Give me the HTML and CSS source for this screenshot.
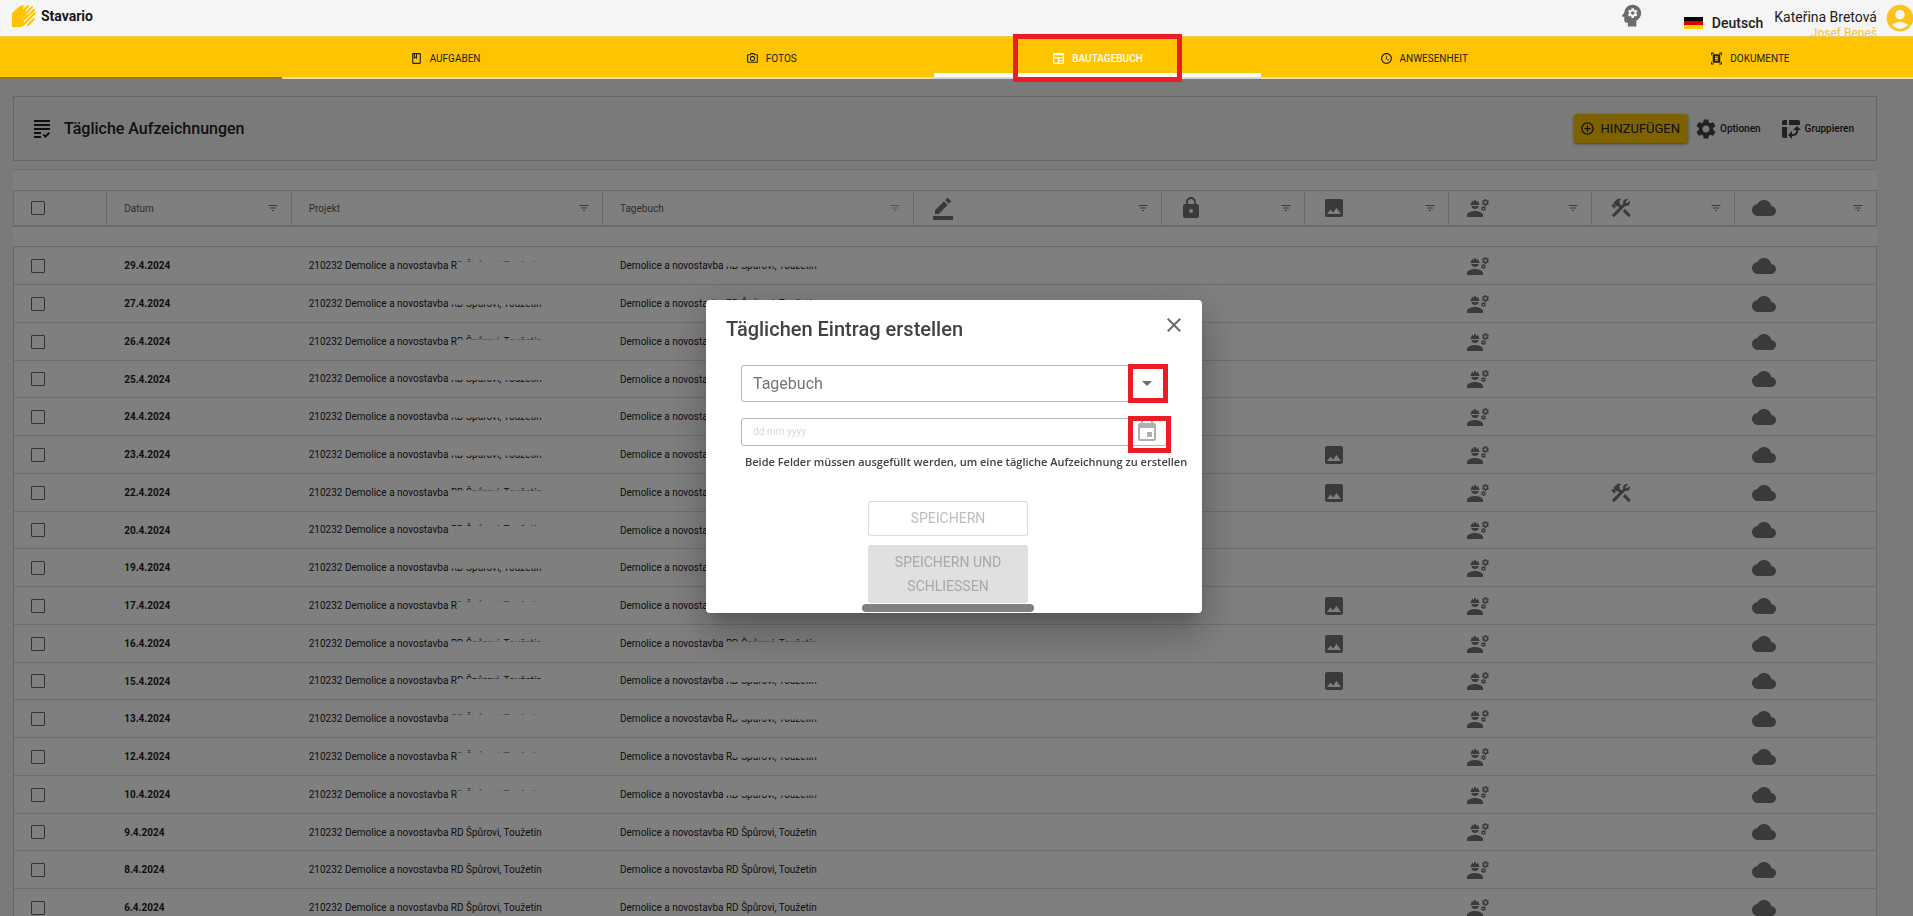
FILE: index.html
```html
<!DOCTYPE html>
<html lang="de">
<head>
<meta charset="utf-8">
<meta name="viewport" content="width=device-width, initial-scale=1">
<title>Stavario – Bautagebuch</title>
<link rel="stylesheet" href="styles.css">
</head>
<body>
<svg class="sprite" aria-hidden="true">
  <symbol id="i-book" viewBox="0 0 24 24"><path d="M18 2H6c-1.1 0-2 .9-2 2v16c0 1.1.9 2 2 2h12c1.1 0 2-.9 2-2V4c0-1.1-.9-2-2-2zM9 4h2v5l-1-.75L9 9V4zm9 16H6V4h1v9l3-2.25L13 13V4h5v16z"/></symbol>
  <symbol id="i-camera" viewBox="0 0 24 24"><path d="M20 4h-3.17L15 2H9L7.17 4H4c-1.1 0-2 .9-2 2v12c0 1.1.9 2 2 2h16c1.1 0 2-.9 2-2V6c0-1.1-.9-2-2-2zm0 14H4V6h4.05l1.83-2h4.24l1.83 2H20v12zM12 7c-2.76 0-5 2.24-5 5s2.24 5 5 5 5-2.24 5-5-2.24-5-5-5zm0 8c-1.65 0-3-1.35-3-3s1.35-3 3-3 3 1.35 3 3-1.35 3-3 3z"/></symbol>
  <symbol id="i-news" viewBox="0 0 24 24"><path fill-rule="evenodd" d="M2 2h20v18c0 1.1-.9 2-2 2H4c-1.100 0-2-.9-2-2V2zm2 4v3h16V6H4zm0 6v8h7v-8H4zm9 0v3h7v-3h-7zm0 5v3h7v-3h-7z"/></symbol>
  <symbol id="i-clock" viewBox="0 0 24 24"><path d="M11.99 2C6.47 2 2 6.48 2 12s4.470 10 9.990 10C17.520 22 22 17.520 22 12S17.520 2 11.990 2zM12 20c-4.420 0-8-3.580-8-8s3.580-8 8-8 8 3.580 8 8-3.580 8-8 8zm.5-13H11v6l5.250 3.150.75-1.230-4.500-2.670z"/></symbol>
  <symbol id="i-scan" viewBox="0 0 24 24"><path d="M7 3H4v3H2V1h5v2zm15 3V1h-5v2h3v3h2zM7 21H4v-3H2v5h5v-2zm13-3v3h-3v2h5v-5h-2zM19 18c0 1.100-.9 2-2 2H7c-1.100 0-2-.9-2-2V6c0-1.100.9-2 2-2h10c1.100 0 2 .9 2 2v12zM15 8H9v2h6V8zm0 3H9v2h6v-2zm0 3H9v2h6v-2z"/></symbol>
  <symbol id="i-grading" viewBox="0 0 24 24"><path d="M4 7h16v2H4V7zm0 6h16v-2H4v2zm0 4h7v-2H4v2zm0 4h7v-2H4v2zm11.410-2.830L14 16.750l-1.410 1.410L15.410 21 20 16.420 18.580 15l-3.170 3.170zM4 3v2h16V3H4z"/></symbol>
  <symbol id="i-add" viewBox="0 0 24 24"><path d="M13 7h-2v4H7v2h4v4h2v-4h4v-2h-4V7zm-1-5C6.480 2 2 6.480 2 12s4.480 10 10 10 10-4.480 10-10S17.520 2 12 2zm0 18c-4.410 0-8-3.590-8-8s3.590-8 8-8 8 3.590 8 8-3.590 8-8 8z"/></symbol>
  <symbol id="i-settings" viewBox="0 0 24 24"><path d="M19.140 12.940c.04-.3.06-.61.06-.94 0-.32-.02-.64-.07-.94l2.030-1.580c.18-.14.23-.41.12-.61l-1.920-3.320c-.12-.22-.37-.29-.59-.22l-2.390.96c-.5-.38-1.030-.7-1.620-.94l-.36-2.540c-.04-.24-.24-.41-.48-.41h-3.840c-.24 0-.43.17-.47.41l-.36 2.540c-.59.24-1.130.57-1.620.94l-2.390-.96c-.22-.08-.47 0-.59.22L2.740 8.870c-.12.21-.08.47.12.61l2.030 1.580c-.05.3-.09.63-.09.94s.02.64.07.94l-2.030 1.580c-.18.14-.23.41-.12.61l1.920 3.320c.12.22.37.29.59.22l2.390-.96c.5.38 1.030.7 1.620.94l.36 2.540c.05.24.24.41.48.41h3.840c.24 0 .44-.17.47-.41l.36-2.540c.59-.24 1.130-.56 1.620-.94l2.390.96c.22.08.47 0 .59-.22l1.920-3.320c.12-.22.07-.47-.12-.61l-2.010-1.580zM12 15.600c-1.980 0-3.600-1.620-3.600-3.600s1.620-3.600 3.600-3.600 3.600 1.620 3.600 3.600-1.620 3.600-3.600 3.600z"/></symbol>
  <symbol id="i-pivot" viewBox="0 0 24 24"><path d="M10 8h11V5c0-1.100-.9-2-2-2h-9v5zM3 8h5V3H5c-1.100 0-2 .9-2 2v3zM5 21h3V10H3v9c0 1.100.9 2 2 2zM13 22l-4-4 4-4zM14 13l4-4 4 4zM14.580 19H13v-2h1.580c1.330 0 2.420-1.080 2.420-2.420V13h2v1.580c0 2.440-1.980 4.420-4.420 4.420z"/></symbol>
  <symbol id="i-filter" viewBox="0 0 24 24"><path d="M10 18h4v-2h-4v2zM3 6v2h18V6H3zm3 7h12v-2H6v2z"/></symbol>
  <symbol id="i-edit" viewBox="0 0 24 24"><path d="M22 24H2v-4h20v4zM13.060 5.190l3.750 3.750L7.750 18H4v-3.750l9.060-9.060zm4.820 2.680-3.750-3.750 1.830-1.830c.39-.39 1.020-.39 1.410 0l2.340 2.340c.39.39.39 1.020 0 1.410l-1.830 1.830z"/></symbol>
  <symbol id="i-lock" viewBox="0 0 24 24"><path d="M18 8h-1V6c0-2.760-2.240-5-5-5S7 3.240 7 6v2H6c-1.100 0-2 .9-2 2v10c0 1.100.9 2 2 2h12c1.100 0 2-.9 2-2V10c0-1.100-.9-2-2-2zm-6 9c-1.100 0-2-.9-2-2s.9-2 2-2 2 .9 2 2-.9 2-2 2zm3.100-9H8.900V6c0-1.710 1.390-3.100 3.100-3.100 1.710 0 3.100 1.390 3.100 3.100v2z"/></symbol>
  <symbol id="i-image" viewBox="0 0 24 24"><path d="M21 19V5c0-1.100-.9-2-2-2H5c-1.100 0-2 .9-2 2v14c0 1.100.9 2 2 2h14c1.100 0 2-.9 2-2zM8.500 13.500l2.500 3.010L14.500 12l4.500 6H5l3.500-4.500z"/></symbol>
  <symbol id="i-worker" viewBox="0 0 24 24"><path d="M9 15c-2.670 0-8 1.340-8 4v2h16v-2c0-2.660-5.330-4-8-4zM22.100 6.840c.01-.11.02-.22.02-.34 0-.12-.01-.23-.03-.34l.74-.58c.07-.05.08-.15.04-.22l-.7-1.210c-.04-.08-.14-.1-.21-.08l-.86.35c-.18-.14-.38-.25-.59-.34l-.13-.93c-.02-.09-.09-.15-.18-.15h-1.400c-.09 0-.16.06-.17.15l-.13.93c-.21.09-.41.21-.59.34l-.87-.35c-.08-.03-.17 0-.21.08l-.7 1.210c-.04.08-.03.17.04.22l.74.58c-.02.11-.03.23-.03.34 0 .11.01.23.03.34l-.74.58c-.07.05-.08.15-.04.22l.7 1.210c.04.08.14.1.21.08l.87-.35c.18.14.38.25.59.34l.13.93c.01.09.08.15.17.15h1.400c.09 0 .16-.06.17-.15l.13-.93c.21-.09.41-.21.59-.34l.87.35c.08.03.17 0 .21-.08l.7-1.210c.04-.08.03-.17-.04-.22l-.73-.58zm-2.600.91c-.69 0-1.250-.56-1.250-1.250s.56-1.250 1.250-1.250 1.250.56 1.250 1.250-.56 1.250-1.250 1.250zM19.920 11.680l-.5-.87c-.03-.06-.1-.08-.15-.06l-.62.25c-.13-.1-.27-.18-.42-.24l-.09-.66c-.02-.06-.08-.1-.14-.1h-1c-.06 0-.11.04-.12.11l-.09.66c-.15.06-.29.15-.42.24l-.62-.25c-.06-.02-.12 0-.15.06l-.5.87c-.03.06-.02.12.03.16l.53.41c-.01.08-.02.16-.02.24 0 .08.01.17.02.24l-.53.41c-.05.04-.06.11-.03.16l.5.87c.03.06.1.08.15.06l.62-.25c.13.1.27.18.42.24l.09.66c.01.07.06.11.12.11h1c.06 0 .12-.04.12-.11l.09-.66c.15-.06.29-.15.42-.24l.62.25c.06.02.12 0 .15-.06l.5-.87c.03-.06.02-.12-.03-.16l-.52-.41c.01-.08.02-.16.02-.24 0-.08-.01-.17-.02-.24l.53-.41c.05-.04.06-.11.04-.17zm-2.420 1.650c-.46 0-.83-.38-.83-.83 0-.46.38-.83.83-.83s.83.38.83.83c0 .46-.37.83-.83.83zM4.740 9h8.530c.27 0 .49-.22.49-.49v-.02c0-.27-.22-.49-.49-.49H13c0-1.480-.81-2.750-2-3.450v.95c0 .28-.22.5-.5.5s-.5-.22-.5-.5V4.140C9.680 4.060 9.350 4 9 4s-.68.06-1 .14V5.500c0 .28-.22.5-.5.5S7 5.780 7 5.500v-.95C5.810 5.250 5 6.520 5 8h-.26c-.27 0-.49.22-.49.49v.03c0 .26.22.48.49.48zM9 13c1.860 0 3.410-1.280 3.860-3H5.140c.45 1.720 2 3 3.860 3z"/></symbol>
  <symbol id="i-tools" viewBox="0 0 24 24"><path d="M13.783 15.172l2.121-2.121 5.996 5.996-2.121 2.121zM17.500 10c1.930 0 3.500-1.570 3.500-3.500 0-.58-.16-1.120-.41-1.600l-2.700 2.700-1.490-1.490 2.700-2.700c-.48-.25-1.020-.41-1.600-.41C15.570 3 14 4.570 14 6.500c0 .41.08.8.21 1.160l-1.850 1.850-1.780-1.780.71-.71-1.410-1.410L12 3.490c-1.170-1.170-3.070-1.170-4.240 0L4.220 7.030l1.410 1.410H2.810l-.71.71 3.540 3.540.71-.71V9.150l1.410 1.410.71-.71 1.780 1.780-7.410 7.410 2.120 2.120L16.340 9.790c.36.13.75.21 1.160.21z"/></symbol>
  <symbol id="i-cloud" viewBox="0 0 24 24"><path d="M19.350 10.040C18.670 6.590 15.640 4 12 4 9.110 4 6.600 5.640 5.350 8.040 2.340 8.360 0 10.910 0 14c0 3.310 2.690 6 6 6h13c2.760 0 5-2.240 5-5 0-2.640-2.050-4.780-4.650-4.960z"/></symbol>
  <symbol id="i-mind" viewBox="0 0 24 24"><path d="M13 8.570c-.79 0-1.430.64-1.430 1.430s.64 1.430 1.430 1.430 1.430-.64 1.430-1.430-.64-1.430-1.430-1.430zM13 3C9.250 3 6.200 5.940 6.020 9.640L4.100 12.200c-.25.33-.01.8.4.8H6v3c0 1.100.9 2 2 2h1v3h7v-4.680c2.360-1.120 4-3.530 4-6.320 0-3.870-3.130-7-7-7zm3 7c0 .13-.01.26-.02.39l.83.66c.08.06.1.16.05.25l-.8 1.390c-.05.09-.16.12-.24.09l-.99-.4c-.21.16-.43.29-.67.39L14 13.830c-.01.1-.1.17-.2.17h-1.600c-.1 0-.18-.07-.2-.17l-.15-1.060c-.25-.1-.47-.23-.68-.39l-.99.4c-.09.03-.2 0-.25-.09l-.8-1.390c-.05-.08-.03-.19.05-.25l.84-.66c-.01-.13-.02-.26-.02-.39s.02-.27.04-.39l-.85-.66c-.08-.06-.1-.16-.05-.26l.8-1.380c.05-.09.15-.12.24-.09l1 .4c.2-.15.43-.29.67-.39L12 6.170c.02-.1.1-.17.2-.17h1.600c.1 0 .18.07.2.17l.15 1.060c.24.1.46.23.67.39l1-.4c.09-.03.2 0 .24.09l.8 1.380c.05.09.03.2-.05.26l-.85.66c.03.12.04.25.04.39z"/></symbol>
  <symbol id="i-user" viewBox="0 0 24 24"><path d="M12 2C6.480 2 2 6.480 2 12s4.480 10 10 10 10-4.480 10-10S17.520 2 12 2zm0 4c1.930 0 3.500 1.570 3.500 3.500S13.930 13 12 13s-3.500-1.570-3.500-3.500S10.070 6 12 6zm0 14c-2.030 0-4.430-.82-6.140-2.880C7.550 15.800 9.680 15 12 15s4.450.8 6.140 2.120C16.430 19.180 14.030 20 12 20z"/></symbol>
  <symbol id="i-close" viewBox="0 0 24 24"><path d="M19 6.410L17.590 5 12 10.590 6.410 5 5 6.410 10.590 12 5 17.590 6.410 19 12 13.410 17.590 19 19 17.590 13.410 12z"/></symbol>
  <symbol id="i-down" viewBox="0 0 24 24"><path d="M7 10l5 5 5-5z"/></symbol>
  <symbol id="i-event" viewBox="0 0 24 24"><path d="M17 12h-5v5h5v-5zM16 1v2H8V1H6v2H5c-1.110 0-1.990.9-1.990 2L3 19c0 1.100.89 2 2 2h14c1.100 0 2-.9 2-2V5c0-1.100-.9-2-2-2h-1V1h-2zm3 18H5V8h14v11z"/></symbol>
</svg>

<header class="header">
  <div class="topbar">
    <a class="brand" href="#">
      <svg class="brand-mark" viewBox="0 0 24 22" aria-hidden="true">
        <path class="brand-solid" d="M0 8 8 1l4-1-1 4 3-1-1 5 2 1-4 5 1 3-2 5H0z"/>
        <path class="brand-rays" d="M9 8l7-7M10 12l10-10M8 18 22 5M11 20l12-12M16 20l6-6"/>
      </svg>
      <span>Stavario</span>
    </a>
    <div class="account">
      <button class="icon-button assistant" aria-label="Assistent"><svg class="icon icon-l"><use href="#i-mind"/></svg></button>
      <button class="language">
        <svg class="flag" viewBox="0 0 19 12" aria-hidden="true"><path fill="#000" d="M0 0h19v4H0z"/><path fill="#d00" d="M0 4h19v4H0z"/><path fill="#ffce00" d="M0 8h19v4H0z"/></svg>
        <span>Deutsch</span>
      </button>
      <div class="names"><span class="name-main">Kateřina Bretová</span><span class="name-sub">Josef Beneš</span></div>
      <button class="icon-button avatar" aria-label="Konto"><svg class="icon icon-xl"><use href="#i-user"/></svg></button>
    </div>
  </div>
  <nav class="tabs">
    <a class="tab" href="#"><svg class="icon icon-s"><use href="#i-book"/></svg>AUFGABEN</a>
    <a class="tab" href="#"><svg class="icon icon-s"><use href="#i-camera"/></svg>FOTOS</a>
    <a class="tab tab-active" href="#" aria-current="page"><svg class="icon icon-s"><use href="#i-news"/></svg>BAUTAGEBUCH<span class="marker marker-tab"></span></a>
    <a class="tab" href="#"><svg class="icon icon-s"><use href="#i-clock"/></svg>ANWESENHEIT</a>
    <a class="tab" href="#"><svg class="icon icon-s"><use href="#i-scan"/></svg>DOKUMENTE</a>
  </nav>
</header>

<main class="main">
  <section class="panel">
    <svg class="icon"><use href="#i-grading"/></svg>
    <h1 class="panel-title">Tägliche Aufzeichnungen</h1>
    <button class="add"><svg class="icon icon-m"><use href="#i-add"/></svg>HINZUFÜGEN</button>
    <button class="tool"><svg class="icon"><use href="#i-settings"/></svg>Optionen</button>
    <button class="tool"><svg class="icon"><use href="#i-pivot"/></svg>Gruppieren</button>
  </section>
  <section class="sheet">
    <table class="grid">
      <colgroup><col class="c-check"><col class="c-date"><col class="c-text"><col class="c-text"><col class="c-sign"><col class="c-icon"><col class="c-icon"><col class="c-icon"><col class="c-icon"><col class="c-icon"></colgroup>
      <thead id="head"></thead>
      <tbody class="spacer" aria-hidden="true"><tr><td colspan="10"></td></tr></tbody>
      <tbody id="rows"></tbody>
    </table>
  </section>
</main>

<div class="backdrop">
  <form class="dialog" role="dialog" aria-labelledby="dialog-title">
    <div class="dialog-head">
      <h2 class="dialog-title" id="dialog-title">Täglichen Eintrag erstellen</h2>
      <button type="button" class="icon-button close" aria-label="Schließen"><svg class="icon"><use href="#i-close"/></svg></button>
    </div>
    <div class="fields">
      <div class="field">
        <select class="control select" aria-label="Tagebuch"><option>Tagebuch</option></select>
        <svg class="icon field-icon arrow"><use href="#i-down"/></svg>
        <span class="marker marker-select"></span>
      </div>
      <div class="field">
        <input class="control date" type="text" placeholder="dd.mm.yyyy" aria-label="Datum">
        <svg class="icon field-icon calendar"><use href="#i-event"/></svg>
        <span class="marker marker-date"></span>
      </div>
    </div>
    <p class="hint">Beide Felder müssen ausgefüllt werden, um eine tägliche Aufzeichnung zu erstellen</p>
    <div class="actions">
      <button type="button" class="action outlined" disabled>SPEICHERN</button>
      <button type="button" class="action filled" disabled>SPEICHERN UND SCHLIESSEN</button>
      <span class="scroll-thumb"></span>
    </div>
  </form>
</div>
<script src="app.js"></script>
</body>
</html>
```
FILE: styles.css
```css
* { box-sizing: border-box; }

body {
  margin: 0;
  height: 100vh;
  overflow: hidden;
  background: #f5f5f5;
  color: #212121;
  font-family: Roboto, "Open Sans", sans-serif;
  font-size: 10px;
}

button, input, select { font: inherit; color: inherit; }
button { border: 0; background: none; padding: 0; }
a { color: inherit; text-decoration: none; }

.sprite { display: none; }
.icon { width: 24px; height: 24px; flex: none; display: block; fill: currentColor; }
.icon-s { width: 13px; height: 13px; }
.icon-m { width: 15px; height: 15px; }
.icon-l { width: 29px; height: 29px; }
.icon-xl { width: 32px; height: 32px; }

/* header */
.header { position: relative; z-index: 2; }
.topbar {
  display: flex;
  justify-content: space-between;
  align-items: flex-start;
  height: 37px;
  padding-left: 12px;
  overflow: hidden;
  background: #f5f5f5;
  border-bottom: 1px solid #e9cb5c;
}
.brand { display: flex; align-items: center; gap: 5px; padding-top: 5px; font-size: 14px; font-weight: 700; line-height: 22px; color: #15171f; }
.brand-mark { width: 24px; height: 22px; }
.brand-solid { fill: #ffc400; }
.brand-rays { fill: none; stroke: #ffc400; stroke-width: 2; stroke-linecap: round; }
.account { display: flex; align-items: flex-start; }
.assistant { color: #6b6b6b; padding-top: 1px; margin-right: 38px; }
.language { display: flex; align-items: center; gap: 9px; padding-top: 11px; margin-right: 11px; font-size: 14px; font-weight: 500; line-height: 24px; }
.flag { width: 19px; height: 12px; }
.names { display: flex; flex-direction: column; align-items: flex-end; padding-top: 9px; line-height: 16px; font-size: 14px; }
.name-sub { font-size: 12px; color: #f0c63a; }
.avatar { color: #fcc419; padding-top: 2px; margin: 0 -3px 0 7px; }

.tabs { display: flex; height: 42px; padding-left: 282px; background: linear-gradient(#ffc400, #ffc400 40px, #8a7432 40px); }
.tab {
  position: relative;
  flex: 1;
  display: flex;
  align-items: center;
  justify-content: center;
  gap: 7px;
  padding-top: 3px;
  background: #ffc400;
  border-bottom: 2px solid #e6dcae;
}
.tab-active { color: #fff; font-weight: 500; border-bottom-color: #d6d6d6; box-shadow: inset 0 -4px #fff; }

.marker { position: absolute; border: 5px solid #ec1c24; pointer-events: none; }
.marker-tab { inset: -3px 79px -5px; }
.marker-select { inset: -1px -1px -1px auto; width: 40px; }
.marker-date { inset: -2px -4px -7px auto; width: 43px; }

/* page */
.main { padding: 17px 36px 0 13px; }
.panel {
  display: flex;
  align-items: center;
  min-height: 65px;
  padding: 0 22px 0 16px;
  border: 1px solid #ccc;
}
.panel-title { flex: 1; margin: 0; padding-left: 10px; font-size: 16px; font-weight: 500; line-height: 24px; }
.add {
  display: flex;
  align-items: center;
  gap: 6px;
  height: 29px;
  padding: 0 8px 0 6px;
  border-radius: 3px;
  background: #ffc400;
  box-shadow: 0 1px 3px rgba(0, 0, 0, .5);
  font-size: 13px;
}
.tool { display: flex; align-items: center; gap: 2px; font-weight: 500; margin-left: 6px; }
.tool + .tool { margin-left: 18px; }
.tool .icon { color: #424242; }

.sheet { margin-top: 8px; padding-top: 20px; background: #fff; border-top: 1px solid #e3e3e3; }
.grid { width: 100%; table-layout: fixed; border-spacing: 0; }
.c-check { width: 5%; }
.c-date { width: 9.9%; }
.c-text { width: 16.7%; }
.c-sign { width: 13.3%; }
.grid th, .grid td { padding: 0 12px 0 17px; text-align: left; white-space: nowrap; font-weight: 400; }
.grid th { height: 37px; border: 1px solid #d4d4d4; border-right-width: 0; border-bottom-width: 2px; color: #5c5c5c; }
.grid th:last-child { border-right-width: 1px; }
.th { display: flex; align-items: center; justify-content: space-between; }
.th .icon { color: #757575; }
.th .filter { width: 12px; height: 12px; }
.th .filter-on { color: #d9a066; }
.grid .spacer td { height: 19px; padding: 0; }
#rows td { height: 38px; border-bottom: 1px solid #dcdcdc; padding-left: 18px; }
#rows tr:first-child td { border-top: 1px solid #d0d0d0; height: 39px; }
#rows tr:nth-child(4n) td { height: 37px; }
#rows td:first-child { border-left: 1px solid #d0d0d0; padding-left: 17px; }
#rows td:last-child { border-right: 1px solid #d0d0d0; }
#rows .icon { color: #757575; }
#rows .day { font-weight: 700; }
.check { appearance: none; display: block; width: 14px; height: 14px; margin: 0; border: 1px solid #666; border-radius: 1px; }

/* partly hidden project names */
.cut { display: inline-block; line-height: 14px; vertical-align: middle; }
.cut-top { clip-path: inset(8px 0 0 0); }
.cut-low { clip-path: inset(0 0 9px 0); }
.cut-mid { clip-path: inset(0 0 11px 0); }

/* dialog */
.backdrop {
  position: fixed;
  inset: 0;
  z-index: 1;
  display: flex;
  align-items: center;
  justify-content: center;
  padding-bottom: 4px;
  background: rgba(0, 0, 0, .5);
}
.dialog {
  width: 496px;
  max-width: 90%;
  padding: 16px 20px 10px;
  margin-right: 5px;
  border-radius: 4px;
  background: #fff;
  box-shadow: 0 11px 15px -7px rgba(0, 0, 0, .2), 0 24px 38px 3px rgba(0, 0, 0, .14), 0 9px 46px 8px rgba(0, 0, 0, .12);
}
.dialog-head { display: flex; align-items: flex-start; justify-content: space-between; }
.dialog-title { margin: 0; font-size: 20px; font-weight: 500; line-height: 26px; color: #424242; }
.close { color: #6b6b6b; margin-right: -4px; margin-top: -3px; }
.fields { display: grid; gap: 16px; padding: 23px 15px 0; }
.field { position: relative; display: flex; align-items: center; }
.control { width: 100%; border: 1px solid #b5b5b5; border-radius: 3px; padding: 0 11px; background: #fff; }
.select { appearance: none; height: 37px; font-size: 16px; color: #757575; }
.date { height: 28px; }
.date::placeholder { color: #d8d8d8; opacity: 1; }
.field-icon { position: absolute; right: 8px; pointer-events: none; }
.arrow { color: #6b6b6b; }
.calendar { color: #b0b0b0; }
.hint { margin: 8px -8px 0 19px; font-family: "Open Sans", "Noto Sans", sans-serif; font-size: 11px; font-weight: 600; line-height: 16px; color: #424242; white-space: nowrap; }
.actions { position: relative; display: flex; flex-direction: column; align-items: center; gap: 9px; margin-right: 12px; padding-top: 31px; }
.action { width: 160px; border-radius: 3px; padding: 5px 12px; font-size: 14px; line-height: 24px; }
.outlined { border: 1px solid #dcdcdc; color: #bdbdbd; height: 35px; padding: 0 12px; }
.filled { background: #e0e0e0; color: #a8a8a8; }
.scroll-thumb { position: absolute; bottom: -9px; width: 172px; height: 8px; border-radius: 4px; background: #808080; }
```
FILE: app.js
```javascript
const icon = (name, cls = "") => `<svg class="icon ${cls}"><use href="#i-${name}"/></svg>`;

const columns = [
  { label: "Datum" }, { label: "Projekt" }, { label: "Tagebuch", filtered: true },
  { icon: "edit" }, { icon: "lock" }, { icon: "image" }, { icon: "worker" }, { icon: "tools" }, { icon: "cloud" }
];

const NAME = "RD Špůrovi, Toužetín";

// date, [readable letters, cut] of the project, [readable letters, cut] of the diary, extra icons
const entries = [
  ["29.4.2024", [1, "mid"], [0, "top"]],
  ["27.4.2024", [0, "top"], [0, "low"]],
  ["26.4.2024", [1, "low"], [20, ""]],
  ["25.4.2024", [0, "top"], [20, ""]],
  ["24.4.2024", [0, "top"], [20, ""]],
  ["23.4.2024", [0, "top"], [20, ""], "image"],
  ["22.4.2024", [0, "low"], [20, ""], "image tools"],
  ["20.4.2024", [0, "mid"], [20, ""]],
  ["19.4.2024", [0, "top"], [20, ""]],
  ["17.4.2024", [1, "mid"], [20, ""], "image"],
  ["16.4.2024", [0, "low"], [0, "low"], "image"],
  ["15.4.2024", [1, "low"], [0, "top"], "image"],
  ["13.4.2024", [0, "mid"], [1, "top"]],
  ["12.4.2024", [1, "mid"], [1, "top"]],
  ["10.4.2024", [1, "mid"], [0, "top"]],
  ["9.4.2024", [20, ""], [20, ""]],
  ["8.4.2024", [20, ""], [20, ""]],
  ["6.4.2024", [20, ""], [20, ""]]
];

const name = ([shown, cut]) =>
  NAME.slice(0, shown) + (cut ? `<span class="cut cut-${cut}">${NAME.slice(shown)}</span>` : "");

document.getElementById("head").innerHTML =
  `<tr><th><input type="checkbox" class="check" aria-label="Alle auswählen"></th>` +
  columns.map(c => `<th><div class="th">${c.icon ? icon(c.icon) : `<span>${c.label}</span>`}${icon("filter", c.filtered ? "filter filter-on" : "filter")}</div></th>`).join("") +
  `</tr>`;

document.getElementById("rows").innerHTML = entries.map(([day, project, diary, extra = ""]) => `<tr>
  <td><input type="checkbox" class="check" aria-label="${day} auswählen"></td>
  <td class="day">${day}</td>
  <td>210232 Demolice a novostavba ${name(project)}</td>
  <td>Demolice a novostavba ${name(diary)}</td>
  <td></td><td></td>
  <td>${extra.includes("image") ? icon("image") : ""}</td>
  <td>${icon("worker")}</td>
  <td>${extra.includes("tools") ? icon("tools") : ""}</td>
  <td>${icon("cloud")}</td>
</tr>`).join("");
```
